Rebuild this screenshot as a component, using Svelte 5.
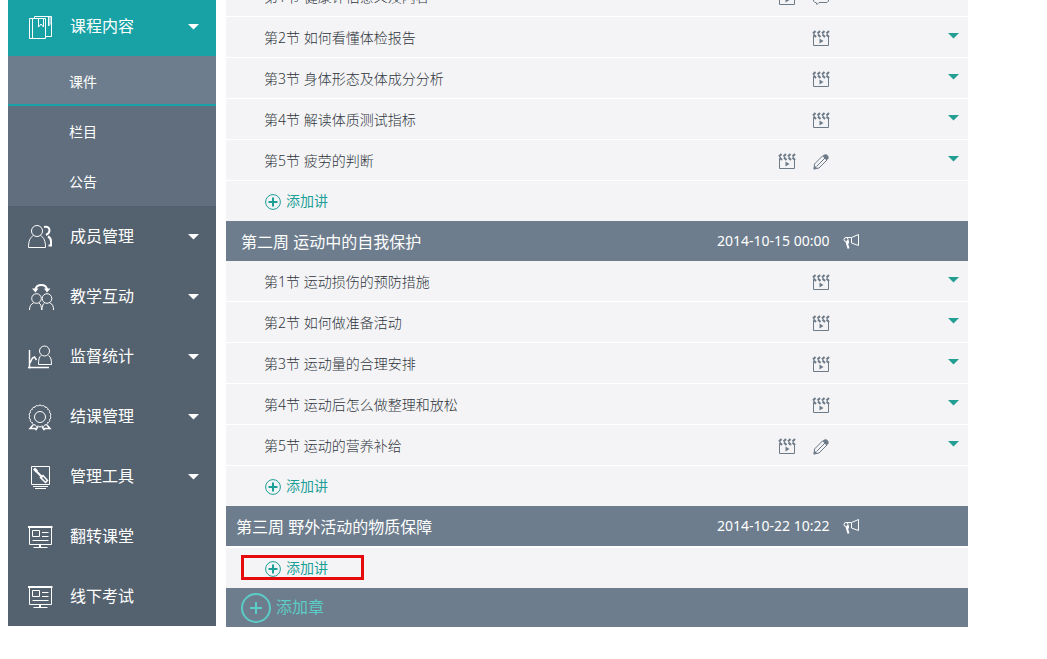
<script>
	let open_menu = $state('content');
	let active_sub = $state('课件');

	const menu = [
		{id: 'content', label: '课程内容', icon: 'book', children: ['课件', '栏目', '公告']},
		{id: 'members', label: '成员管理', icon: 'members', children: []},
		{id: 'interact', label: '教学互动', icon: 'interact', children: []},
		{id: 'stats', label: '监督统计', icon: 'stats', children: []},
		{id: 'finish', label: '结课管理', icon: 'ribbon', children: []},
		{id: 'tools', label: '管理工具', icon: 'tools', children: []},
		{id: 'flip', label: '翻转课堂', icon: 'board'},
		{id: 'offline', label: '线下考试', icon: 'board'}
	];

	const weeks = [
		{
			lessons: [
				{title: '第1节 健康评估意义及内容', types: ['video', 'comment']},
				{title: '第2节 如何看懂体检报告', types: ['video']},
				{title: '第3节 身体形态及体成分分析', types: ['video']},
				{title: '第4节 解读体质测试指标', types: ['video']},
				{title: '第5节 疲劳的判断', types: ['video', 'pencil']}
			]
		},
		{
			title: '第二周 运动中的自我保护',
			time: '2014-10-15 00:00',
			lessons: [
				{title: '第1节 运动损伤的预防措施', types: ['video']},
				{title: '第2节 如何做准备活动', types: ['video']},
				{title: '第3节 运动量的合理安排', types: ['video']},
				{title: '第4节 运动后怎么做整理和放松', types: ['video']},
				{title: '第5节 运动的营养补给', types: ['video', 'pencil']}
			]
		},
		{
			title: '第三周 野外活动的物质保障',
			time: '2014-10-22 10:22',
			marked: true,
			lessons: []
		}
	];

	// wavy edge of the ribbon badge
	function scallop(cx, cy, r, count) {
		let d = '';
		for (let i = 0; i <= count; i++) {
			const a = (i / count) * Math.PI * 2;
			const x = (cx + r * Math.cos(a)).toFixed(2);
			const y = (cy + r * Math.sin(a)).toFixed(2);
			d += i === 0 ? `M${x} ${y}` : `A1.9 1.9 0 0 1 ${x} ${y}`;
		}
		return d;
	}

	function toggle(id) {
		open_menu = open_menu === id ? '' : id;
	}
</script>

{#snippet menuIcon(name)}
	<svg class="menu-icon" viewBox="0 0 26 26" aria-hidden="true">
		{#if name === 'book'}
			<path d="M2.5 5.5h16v20h-16zM5.5 5.5v20M7.5 5.5v-2h17v20h-5.500" />
			<path d="M11.500 5.500v8.500l2.500-3 2.500 3v-8.500M21.500 4v9l1.500-1.500V4" />
		{:else if name === 'members'}
			<circle cx="10" cy="8" r="5.500" />
			<path d="M6.500 12.500C3 14.500 1.500 18 1.500 24.500h17c0-6.500-1.500-10-5-12" />
			<path class="heavy" d="M17 4c4-1 5.500 1 5.500 3.500s-1.500 3.500-3.500 4.500M21 13.500c2 1 3 2.500 3 5v4h-2.500" />
		{:else if name === 'interact'}
			<path class="heavy" d="M8.500 6.500C9.500 .5 19 .5 20 6.500" />
			<path class="solid" d="M5 5.500h6.500l-3 4zM17 5.500h6.500l-3.500 4z" />
			<circle cx="9.500" cy="15.500" r="4.800" />
			<circle cx="20" cy="15.500" r="4.800" />
			<path d="M2.500 27c0-4 1.500-6 4-7M12 20c2 1 2.500 4 2.500 7M17.500 20c-2 1-2.500 4-2.500 7M23 20c2.500 1 3.500 3 3.500 7" />
		{:else if name === 'stats'}
			<path class="thick" d="M2.500 7v18.500M1 24.500h21M3 20l2.500-5 2-1 2 3" />
			<circle cx="17.500" cy="8" r="5" />
			<path d="M14 12.500c-2 1.500-2.500 4.500-2.500 9h13c0-4.500-.5-7.500-3-9" />
		{:else if name === 'ribbon'}
			<path d={scallop(13, 13, 10, 18)} />
			<circle cx="13" cy="14" r="5.500" />
			<path class="thick" d="M6 22l-3 3.500h5l1 1 2-3M20 22l3 3.500h-5l-1 1-2-3" />
		{:else if name === 'tools'}
			<path d="M4.500 3.500h18v18h-18zM6 23.500h15M8 25.500h11" />
			<path class="heavy" d="M7.500 6.500l8 8" />
			<path class="solid" d="M6 6.500l2-2 3 3-2 2z" />
			<path class="thick" d="M13.500 14.500l2.500-2 4.500 5-2 2z" />
		{:else}
			<path class="heavy" d="M1 4h24.500" />
			<path d="M2.500 5v16.500h22V5M5.500 7.500h7v6h-7zM15 9.500h6.500M15 13.500h6.500M5.500 17.500h16M6.500 24.500h14" />
			<path class="heavy" d="M13 21.500v3" />
		{/if}
	</svg>
{/snippet}

{#snippet lessonIcon(name)}
	<svg class="lesson-icon" viewBox="0 0 16 16" aria-hidden="true">
		{#if name === 'video'}
			<path d="M.5 5v9.500h15V5" />
			<path class="heavy" d="M0 2.500L2.500 0M4.500 2.500L7 0M9 2.500L11.500 0M13.500 2.500L16 0M.5 3.500L3 6M5 3.500L7.500 6M9.500 3.500L12 6M13.500 3.500L16 6" />
			<path class="solid" d="M6.500 7.500l4 2.500-4 2.500z" />
		{:else if name === 'comment'}
			<path d="M2 .5h12l1.500 1.500v9l-1.500 1.500H6l-2 2-1-2H2L.5 11V2z" />
		{:else}
			<path class="solid" d="M9.500 2l2-1.500c1.500-1 5 1.500 4 4L13.500 6.500z" />
			<path d="M10 1.500L1.500 10l-.5 5 5-1 8-8M12 4l-8.500 8.500" />
			<path class="solid" d="M1.500 11.500l3 3-4 1z" />
		{/if}
	</svg>
{/snippet}

{#snippet caret()}
	<svg class="caret" viewBox="0 0 11 6" aria-hidden="true"><path d="M0 0h11L5.500 5.500z" /></svg>
{/snippet}

<div class="page">
	<nav class="sidebar">
		{#each menu as item}
			{#if item.children}
				<button class="menu-item" class:open={open_menu === item.id} onclick={() => toggle(item.id)}>
					{@render menuIcon(item.icon)}
					<span class="menu-label">{item.label}</span>
					{@render caret()}
				</button>
				{#if open_menu === item.id}
					{#each item.children as sub}
						<a class="sub-item" class:active={active_sub === sub} href="#sub" onclick={() => (active_sub = sub)}>{sub}</a>
					{/each}
				{/if}
			{:else}
				<a class="menu-item" href="#{item.id}">
					{@render menuIcon(item.icon)}
					<span class="menu-label">{item.label}</span>
				</a>
			{/if}
		{/each}
	</nav>

	<main class="chapters">
		{#each weeks as week}
			<section class:marked={week.marked}>
				{#if week.title}
					<header class="week">
						<h2>{week.title}</h2>
						<time>{week.time}</time>
						<svg class="horn" viewBox="0 0 16 16" aria-hidden="true">
							<path d="M15.500 1.500v11L8.500 10V4.500zM8 4.500H3.500" />
							<circle cx="3" cy="6.500" r="2" />
							<path class="heavy" d="M3.500 9L5.500 15.500M5 7.500v3" />
						</svg>
					</header>
				{/if}
				{#each week.lessons as lesson}
					<div class="lesson">
						<span class="lesson-title">{lesson.title}</span>
						{#each lesson.types as type}
							{@render lessonIcon(type)}
						{/each}
						<button class="more" aria-label="展开">{@render caret()}</button>
					</div>
				{/each}
				<div class="add-row">
					<button class="add-lesson">
						<svg class="plus" viewBox="0 0 16 16" aria-hidden="true">
							<circle cx="8" cy="8" r="7.400" />
							<path class="heavy" d="M8 3.500v9M3.500 8h9" />
						</svg>
						添加讲
					</button>
				</div>
			</section>
		{/each}
		<button class="add-chapter">
			<svg class="plus-big" viewBox="0 0 30 30" aria-hidden="true">
				<circle cx="15" cy="15" r="14" />
				<path d="M15 9v12M9 15h12" />
			</svg>
			<span class="add-label">添加章</span>
		</button>
	</main>
</div>

<style>
	:global(body) {
		margin: 0;
		background: #fff;
		font-family: "Noto Sans", "Noto Sans CJK SC", sans-serif;
	}

	button {
		border: 0;
		padding: 0;
		background: none;
		color: inherit;
		font: inherit;
		text-align: left;
		cursor: pointer;
	}

	a {
		text-decoration: none;
	}

	svg {
		flex: none;
		fill: none;
		stroke: currentColor;
		overflow: visible;
	}

	.page {
		display: flex;
		align-items: flex-start;
		gap: 10px;
		padding: 0 79px 0 8px;
	}

	/* the page is scrolled a little, so both columns start above the window */
	.sidebar {
		flex: none;
		width: 208px;
		margin-top: -4px;
		background: #54616e;
		color: #fff;
	}

	.menu-item {
		display: flex;
		align-items: center;
		gap: 17px;
		box-sizing: border-box;
		width: 100%;
		height: 60px;
		padding: 0 17px 0 19px;
		color: #fff;
		font-size: 16px;
	}

	.menu-item.open {
		background: #19a2a5;
	}

	.menu-label {
		flex: 1;
		padding-bottom: 2px;
	}

	.menu-icon {
		width: 26px;
		height: 26px;
	}

	.thick {
		stroke-width: 1.5;
	}

	.heavy {
		stroke-width: 2;
	}

	.solid {
		fill: currentColor;
		stroke: none;
	}

	.caret {
		display: block;
		width: 11px;
		height: 6px;
		margin-top: 2px;
		fill: currentColor;
		stroke: none;
	}

	.sub-item {
		display: block;
		box-sizing: border-box;
		height: 50px;
		padding-left: 61px;
		background: #616e7e;
		color: #fff;
		font-size: 14px;
		line-height: 52px;
	}

	.sub-item.active {
		border-bottom: 2px solid #19a2a5;
		background: #6d7d8d;
	}

	.chapters {
		flex: 1;
		min-width: 0;
		margin-top: -24px;
	}

	.week {
		display: flex;
		align-items: center;
		height: 40px;
		padding: 0 109px 0 15px;
		background: #6d7d8d;
		color: #fff;
	}

	.marked .week {
		padding-left: 10px;
		border-bottom: 2px solid #fff;
	}

	h2 {
		flex: 1;
		margin: 0;
		font-size: 16px;
		font-weight: 400;
	}

	time {
		width: 126px;
		padding-bottom: 2px;
		font-size: 14px;
	}

	.horn {
		width: 16px;
		height: 16px;
	}

	.lesson {
		display: flex;
		align-items: center;
		gap: 18px;
		height: 40px;
		padding: 0 9px 0 38px;
		border-bottom: 1px solid #fff;
		background: #f4f4f6;
		color: #6d7a88;
	}

	.lesson-title {
		flex: 1;
		color: #30363d;
		font-size: 14px;
		font-weight: 300;
	}

	.lesson-icon {
		width: 16px;
		height: 16px;
		margin-top: 4px;
	}

	.more {
		margin-left: 101px;
		padding-bottom: 4px;
		color: #229e92;
	}

	.add-row {
		box-sizing: border-box;
		height: 40px;
		padding: 7px 0 0 15px;
		background: #f4f4f6;
	}

	.add-lesson {
		display: flex;
		align-items: center;
		gap: 5px;
		height: 25px;
		padding: 0 33px 0 21px;
		border: 3px solid transparent;
		color: #1b9f97;
		font-size: 14px;
		line-height: 19px;
	}

	.marked .add-lesson {
		border-color: #e60b0b;
	}

	.plus {
		width: 16px;
		height: 16px;
		margin-top: 2px;
	}

	.add-chapter {
		display: flex;
		align-items: center;
		gap: 5px;
		width: 100%;
		height: 39px;
		padding-left: 15px;
		background: #6d7d8d;
		color: #5cccc6;
		font-size: 16px;
	}

	.add-label {
		padding-bottom: 4px;
	}

	.plus-big {
		width: 30px;
		height: 30px;
		stroke-width: 2;
	}
</style>
